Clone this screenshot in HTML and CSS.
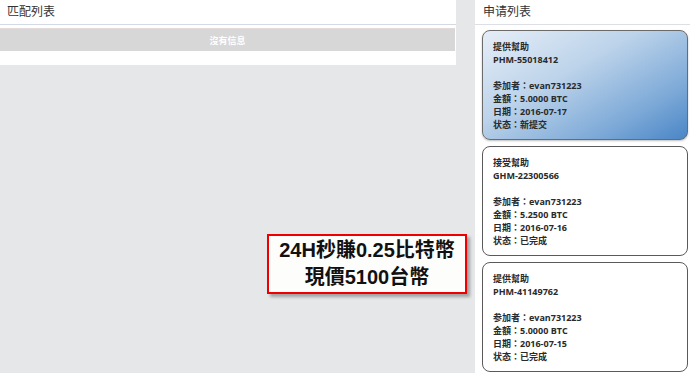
FILE: index.html
```html
<!DOCTYPE html>
<html lang="zh-Hant">
<head>
    <meta charset="UTF-8">
    <title>申请列表</title>
    <link rel="stylesheet" href="styles.css">
</head>
<body>
<div class="page">
    <div class="match-panel">
        <div class="panel-title">匹配列表</div>
        <div class="empty-row">沒有信息</div>
    </div>

    <div class="apply-panel">
        <div class="panel-title">申请列表</div>
        <div class="card-list">
            <div class="card card-new">
                <div>提供幫助</div>
                <div>PHM-55018412</div>
                <div class="blank"></div>
                <div>参加者：evan731223</div>
                <div>金額：5.0000 BTC</div>
                <div>日期：2016-07-17</div>
                <div>状态：新提交</div>
            </div>
            <div class="card">
                <div>接受幫助</div>
                <div>GHM-22300566</div>
                <div class="blank"></div>
                <div>参加者：evan731223</div>
                <div>金額：5.2500 BTC</div>
                <div>日期：2016-07-16</div>
                <div>状态：已完成</div>
            </div>
            <div class="card">
                <div>提供幫助</div>
                <div>PHM-41149762</div>
                <div class="blank"></div>
                <div>参加者：evan731223</div>
                <div>金額：5.0000 BTC</div>
                <div>日期：2016-07-15</div>
                <div>状态：已完成</div>
            </div>
        </div>
    </div>
</div>

<div class="promo">
    <div>24H秒賺0.25比特幣</div>
    <div>現價5100台幣</div>
</div>
</body>
</html>
```

FILE: styles.css
```css
body {
    margin: 0;
    background-color: #e6e7e9;
    font-family: "Open Sans", "Noto Sans CJK TC", sans-serif;
    color: #333333;
    overflow: hidden;
}

.page {
    display: flex;
    align-items: flex-start;
    column-gap: 19px;
    height: 373px;
}

.match-panel {
    width: 456px;
    height: 65px;
    background-color: #ffffff;
}

.panel-title {
    height: 25px;
    line-height: 24px;
    padding-left: 7px;
    font-size: 12px;
    color: #333333;
    border-bottom: 1px solid #dcdfe6;
    box-sizing: border-box;
}

.match-panel .panel-title {
    border-bottom-color: #d4d8e2;
}

.empty-row {
    margin-top: 3px;
    width: 455px;
    height: 23px;
    line-height: 23px;
    background-color: #d7d7d7;
    border-top: 1px solid #e2dada;
    box-sizing: border-box;
    color: #ffffff;
    font-size: 9px;
    font-weight: bold;
    text-align: center;
}

.apply-panel {
    width: 215px;
    height: 373px;
    background-color: #ffffff;
}

.apply-panel .panel-title {
    padding-left: 8px;
}

.card-list {
    display: flex;
    flex-direction: column;
    row-gap: 6px;
    padding: 5px 2px 0 7px;
}

.card {
    height: 110px;
    box-sizing: border-box;
    border: 1px solid #5a5a5a;
    border-radius: 8px;
    padding: 9px 10px 0 10px;
    font-size: 9px;
    line-height: 13px;
    font-weight: bold;
    color: #2a2a2a;
    background-color: #ffffff;
}

.card .blank {
    height: 13px;
}

.card-new {
    border-color: #6b6b6b;
    background: linear-gradient(150deg, #e6eef7 0%, #bcd3ea 40%, #7eaad8 75%, #4a86c6 100%);
    box-shadow: 0 1px 2px rgba(0, 0, 0, 0.25);
}

.promo {
    position: absolute;
    left: 267px;
    top: 234px;
    width: 200px;
    height: 60px;
    box-sizing: border-box;
    border: 2px solid #ee0000;
    background-color: #fdfdfb;
    box-shadow: 3px 3px 3px rgba(0, 0, 0, 0.3);
    display: flex;
    flex-direction: column;
    justify-content: center;
    text-align: center;
    font-family: "Liberation Sans", "Noto Sans CJK TC", sans-serif;
    font-size: 20px;
    font-weight: bold;
    line-height: 27px;
    color: #111111;
}
```
